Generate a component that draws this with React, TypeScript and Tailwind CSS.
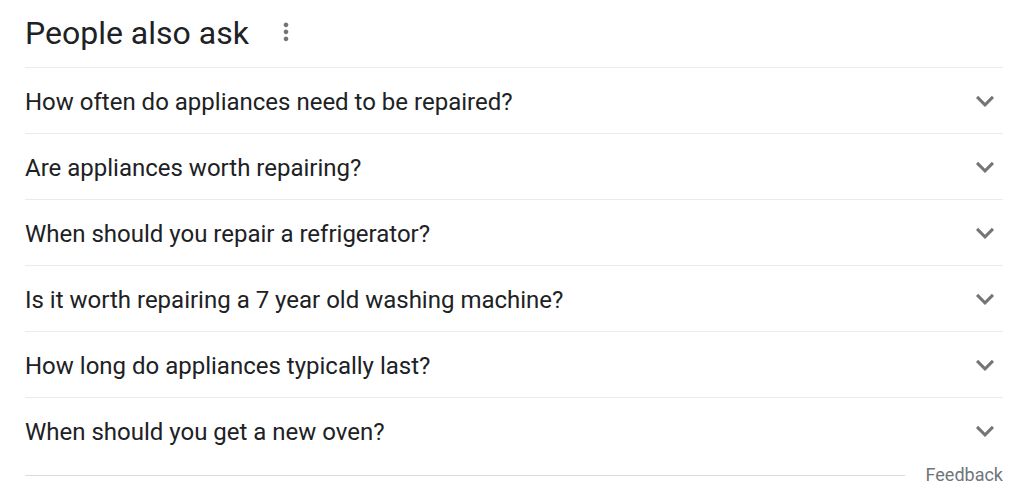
import { useState } from "react";

const questions = [
    "How often do appliances need to be repaired?",
    "Are appliances worth repairing?",
    "When should you repair a refrigerator?",
    "Is it worth repairing a 7 year old washing machine?",
    "How long do appliances typically last?",
    "When should you get a new oven?",
];

interface QuestionRowProps {
    question: string;
    open: boolean;
    onToggle: () => void;
}

function QuestionRow({ question, open, onToggle }: QuestionRowProps) {
    return (
        <li className="border-t border-[#ebebeb]">
            <button
                type="button"
                aria-expanded={open}
                onClick={onToggle}
                className="flex h-[65px] w-full cursor-pointer items-center justify-between pt-0.5 text-left"
            >
                <span className="text-2xl">{question}</span>
                <svg viewBox="0 0 24 24" className={`size-9 shrink-0 fill-[#757575] ${open ? "rotate-180" : ""}`} aria-hidden="true">
                    <path d="M7.41 7.9 12 12.48l4.59-4.58L18 9.31l-6 6-6-6z" />
                </svg>
            </button>
        </li>
    );
}

export default function App() {
    const [openIndex, setOpenIndex] = useState<number | null>(null);

    return (
        <main className="min-h-screen bg-white pr-[29px] pl-[25px] font-['Roboto',sans-serif] text-[#202124]">
            <header className="flex h-[67px] items-center gap-[23px] pb-px">
                <h2 className="text-[32px] leading-10">People also ask</h2>
                <button type="button" aria-label="About this result" className="cursor-pointer">
                    <svg viewBox="0 0 24 24" className="size-7 fill-[#70757a]" aria-hidden="true">
                        <path d="M12 7c1.1 0 2-.9 2-2s-.9-2-2-2-2 .9-2 2 .9 2 2 2zm0 2c-1.1 0-2 .9-2 2s.9 2 2 2 2-.9 2-2-.9-2-2-2zm0 6c-1.1 0-2 .9-2 2s.9 2 2 2 2-.9 2-2-.9-2-2-2z" />
                    </svg>
                </button>
            </header>
            <ul>
                {questions.map((question, i) => (
                    <QuestionRow
                        key={question}
                        question={question}
                        open={openIndex === i}
                        onToggle={() => setOpenIndex(openIndex === i ? null : i)}
                    />
                ))}
            </ul>
            <footer className="flex items-center gap-[21px]">
                <div className="h-px flex-1 bg-[#dadce0]" />
                <a href="#feedback" className="text-lg leading-6 text-[#70757a]">Feedback</a>
            </footer>
        </main>
    );
}
